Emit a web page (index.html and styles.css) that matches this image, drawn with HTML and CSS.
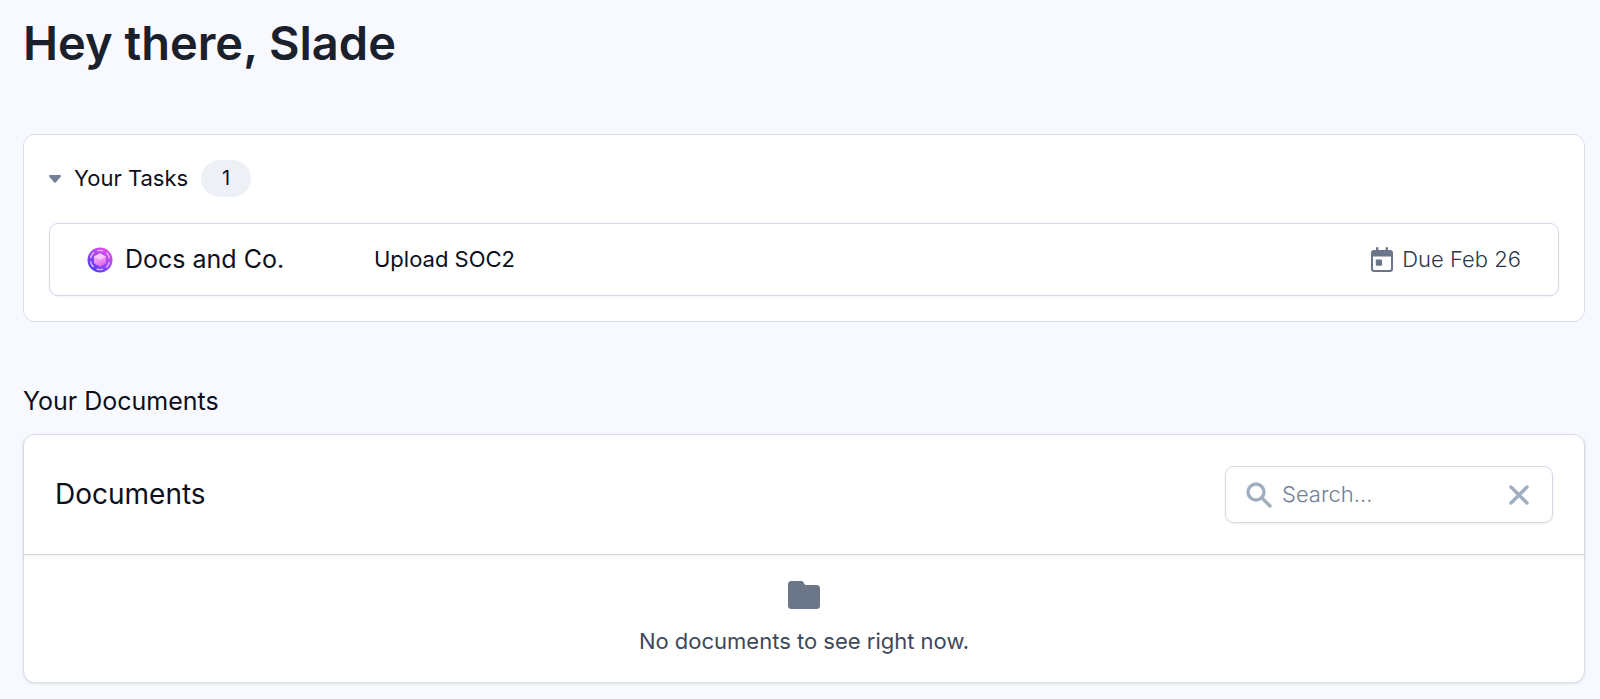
FILE: index.html
```html
<!DOCTYPE html>
<html lang="en">
<head>
    <meta charset="UTF-8">
    <meta name="viewport" content="width=device-width, initial-scale=1.0">
    <title>Home</title>
    <link rel="stylesheet" href="styles.css">
</head>
<body>
    <main class="page">
        <h1>Hey there, Slade</h1>

        <!-- Tasks -->
        <section class="card tasks">
            <button class="tasks-toggle" type="button" aria-expanded="true">
                <svg class="caret" viewBox="0 0 12 8" aria-hidden="true">
                    <path d="M1.2 0h9.6c1 0 1.5 1 .9 1.8L7 7.2a1.4 1.4 0 0 1-2 0L.3 1.8C-.3 1 .2 0 1.2 0z"/>
                </svg>
                <span>Your Tasks</span>
                <span class="badge">1</span>
            </button>

            <a class="task" href="#">
                <svg class="task-logo" viewBox="0 0 26 26" aria-hidden="true">
                    <defs>
                        <linearGradient id="logoRing" x1="0.15" y1="1" x2="0.85" y2="0">
                            <stop offset="0" stop-color="#3b3bf5"/>
                            <stop offset="0.5" stop-color="#9a48f2"/>
                            <stop offset="1" stop-color="#f04be8"/>
                        </linearGradient>
                        <linearGradient id="logoGem" x1="0.3" y1="0" x2="0.7" y2="1">
                            <stop offset="0" stop-color="#ffc8fa"/>
                            <stop offset="1" stop-color="#d95cf0"/>
                        </linearGradient>
                    </defs>
                    <circle cx="13" cy="13" r="12.5" fill="url(#logoRing)"/>
                    <circle cx="13" cy="13" r="9.6" fill="none" stroke="#e3b4fb" stroke-width="1.4" stroke-dasharray="6.5 3.55" stroke-dashoffset="3.25" transform="rotate(-90 13 13)"/>
                    <path d="M13 6.2l5.9 3.4v6.8L13 19.8l-5.9-3.4V9.6z" fill="url(#logoGem)"/>
                    <path d="M13 6.2l5.9 3.4L13 13 7.1 9.6z" fill="#ffd9fb" opacity=".6"/>
                </svg>
                <span class="task-company">Docs and Co.</span>
                <span class="task-name">Upload SOC2</span>
                <span class="task-due">
                    <svg class="calendar" viewBox="0 0 22 26" aria-hidden="true">
                        <path fill-rule="evenodd" d="M5 1.2a1.2 1.2 0 0 1 2.4 0V3h7.2V1.2a1.2 1.2 0 0 1 2.4 0V3h2a3 3 0 0 1 3 3v16a3 3 0 0 1-3 3H3a3 3 0 0 1-3-3V6a3 3 0 0 1 3-3h2zM2 9.4V21.5a1.5 1.5 0 0 0 1.5 1.5h15a1.5 1.5 0 0 0 1.5-1.5V9.4z"/>
                        <rect x="4.8" y="12.5" width="6.2" height="6.2" rx="0.8"/>
                    </svg>
                    Due Feb 26
                </span>
            </a>
        </section>

        <!-- Documents -->
        <h2>Your Documents</h2>
        <section class="card documents">
            <div class="documents-header">
                <h3>Documents</h3>
                <div class="search">
                    <svg class="search-icon" viewBox="0 0 26 26" aria-hidden="true">
                        <circle cx="10" cy="10" r="8"/>
                        <path d="M16 16l8 8"/>
                    </svg>
                    <input type="text" placeholder="Search..." aria-label="Search documents">
                    <button class="search-clear" type="button" aria-label="Clear search">
                        <svg viewBox="0 0 20 20" aria-hidden="true">
                            <path d="M2 2l16 16M18 2L2 18"/>
                        </svg>
                    </button>
                </div>
            </div>
            <div class="documents-empty">
                <svg class="folder" viewBox="0 0 32 28" aria-hidden="true">
                    <path d="M3.5 0H13c1.2 0 1.9.5 2.5 1.4l1 1.6c.5.7 1 1 1.9 1h10.1A3.5 3.5 0 0 1 32 7.5v17a3.5 3.5 0 0 1-3.5 3.5h-25A3.5 3.5 0 0 1 0 24.5v-21A3.5 3.5 0 0 1 3.5 0z"/>
                </svg>
                <p>No documents to see right now.</p>
            </div>
        </section>
    </main>
</body>
</html>
```

FILE: styles.css
```css
* {
    box-sizing: border-box;
}

body {
    margin: 0;
    background-color: #f8f9ff;
    color: #0d0f1c;
    font-family: Inter, sans-serif;
    font-size: 22px;
    line-height: 31px;
}

.page {
    padding: 15px 15px 15px 23px;
}

h1, h2, h3, p {
    margin: 0;
}

h1 {
    color: #1a202c;
    font-size: 47px;
    font-weight: 600;
    line-height: 56px;
    margin-bottom: 63px;
}

h2 {
    font-size: 25px;
    font-weight: 400;
    margin-top: 64px;
    margin-bottom: 17px;
}

h3 {
    font-size: 28px;
    font-weight: 400;
}

button, input {
    border: none;
    background: none;
    padding: 0;
    color: inherit;
    font: inherit;
}

button {
    cursor: pointer;
}

.card {
    background-color: #fff;
    border: 1px solid #d8deea;
    border-radius: 12px;
}

/* Tasks */
.tasks {
    padding: 25px;
}

.tasks-toggle {
    display: flex;
    align-items: center;
    gap: 13px;
    margin-bottom: 26px;
}

.caret {
    width: 12px;
    height: 8px;
    fill: #718096;
}

.badge {
    min-width: 50px;
    padding: 3px 16px;
    background-color: #edf1f6;
    border-radius: 19px;
    font-size: 20px;
    text-align: center;
}

.task {
    display: flex;
    align-items: center;
    padding: 20px 37px;
    border: 1px solid #d3dae6;
    border-radius: 9px;
    box-shadow: 0 1px 3px rgba(0, 0, 0, 0.06);
    color: inherit;
    text-decoration: none;
}

.task-logo {
    width: 26px;
    height: 26px;
    margin-right: 12px;
}

.task-company {
    width: 249px;
    font-size: 25px;
}

.task-due {
    display: flex;
    align-items: center;
    gap: 9px;
    margin-left: auto;
    color: #2d3748;
    font-weight: 300;
}

.calendar {
    width: 22px;
    height: 26px;
    fill: #6b7689;
}

/* Documents */
.documents {
    box-shadow: 0 1px 3px rgba(0, 0, 0, 0.1);
}

.documents-header {
    display: flex;
    align-items: center;
    justify-content: space-between;
    padding: 31px;
    border-bottom: 1px solid #cdd5e1;
    box-shadow: 0 2px 6px rgba(0, 0, 0, 0.05);
}

.search {
    display: flex;
    align-items: center;
    width: 328px;
    height: 57px;
    padding: 0 23px 0 20px;
    border: 1px solid #d3dae6;
    border-radius: 9px;
    box-shadow: 0 1px 3px rgba(0, 0, 0, 0.08);
}

.search svg {
    fill: none;
    stroke: #a0aec0;
    stroke-width: 3.4;
    stroke-linecap: round;
}

.search-icon {
    flex: none;
    width: 26px;
    height: 26px;
}

.search input {
    flex: 1;
    min-width: 0;
    margin-left: 10px;
    font-weight: 300;
    outline: none;
}

.search input::placeholder {
    color: #718096;
    opacity: 1;
}

.search-clear {
    display: flex;
}

.search-clear svg {
    width: 20px;
    height: 20px;
}

.documents-empty {
    display: flex;
    flex-direction: column;
    align-items: center;
    gap: 17px;
    padding: 26px 16px 25px;
    color: #3d485c;
}

.folder {
    width: 32px;
    height: 28px;
    fill: #6b7689;
}
```
